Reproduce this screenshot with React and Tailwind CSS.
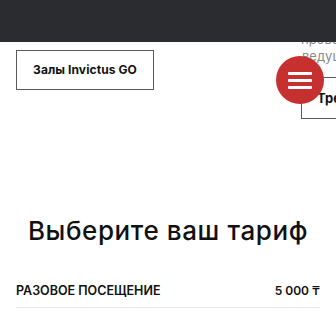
export default function App() {
  return (
    <div className="relative w-[336px] h-[332px] overflow-hidden bg-white" style={{ fontFamily: 'Inter, "Noto Sans", sans-serif' }}>
      {/* fixed top bar over content */}
      <div className="absolute top-0 left-0 right-0 h-[42px] bg-[#2b2c30] z-10" />

      <div className="pt-[31px]">
        <div className="flex items-start">
          <div className="pt-[19px] pl-4">
            <button className="w-[138px] h-[40px] border border-[#5a5a5a] text-[12px] font-bold text-[#111] tracking-[0.1px]">
              Залы Invictus GO
            </button>
          </div>
          <div className="ml-[147px] flex flex-col shrink-0 w-[200px]">
            <p className="text-[13px] leading-[17px] text-[#8a8a8a] whitespace-nowrap">проведите</p>
            <p className="text-[13px] leading-[17px] text-[#8a8a8a] whitespace-nowrap pl-[1px]">ведущих</p>
            <div className="relative mt-[12px] h-[42px] border border-[#5a5a5a] flex items-center pl-[15px] pt-[2px]">
              <span className="text-[13px] font-bold text-[#111]">Тренеры</span>
            </div>
          </div>
        </div>

        <h1 className="mt-[96px] text-center text-[26px] font-medium text-[#111] leading-[32px] tracking-[0.6px]">
          Выберите ваш тариф
        </h1>

        <div className="mx-4 mt-[36px] flex items-center justify-between pb-[9px] border-b border-[#e6e6e6] leading-[15px]">
          <span className="text-[12.5px] font-semibold text-[#111]">РАЗОВОЕ ПОСЕЩЕНИЕ</span>
          <span className="text-[12px] font-semibold text-[#111]">5 000 ₸</span>
        </div>
      </div>

      {/* floating menu button */}
      <button className="absolute left-[276px] top-[56px] w-[48px] h-[48px] rounded-full bg-[#c6302f] flex flex-col items-center justify-center gap-[4px] z-20">
        <span className="block w-[24px] h-[3px] bg-white rounded-[1px]" />
        <span className="block w-[24px] h-[3px] bg-white rounded-[1px]" />
        <span className="block w-[24px] h-[3px] bg-white rounded-[1px]" />
      </button>
    </div>
  );
}
